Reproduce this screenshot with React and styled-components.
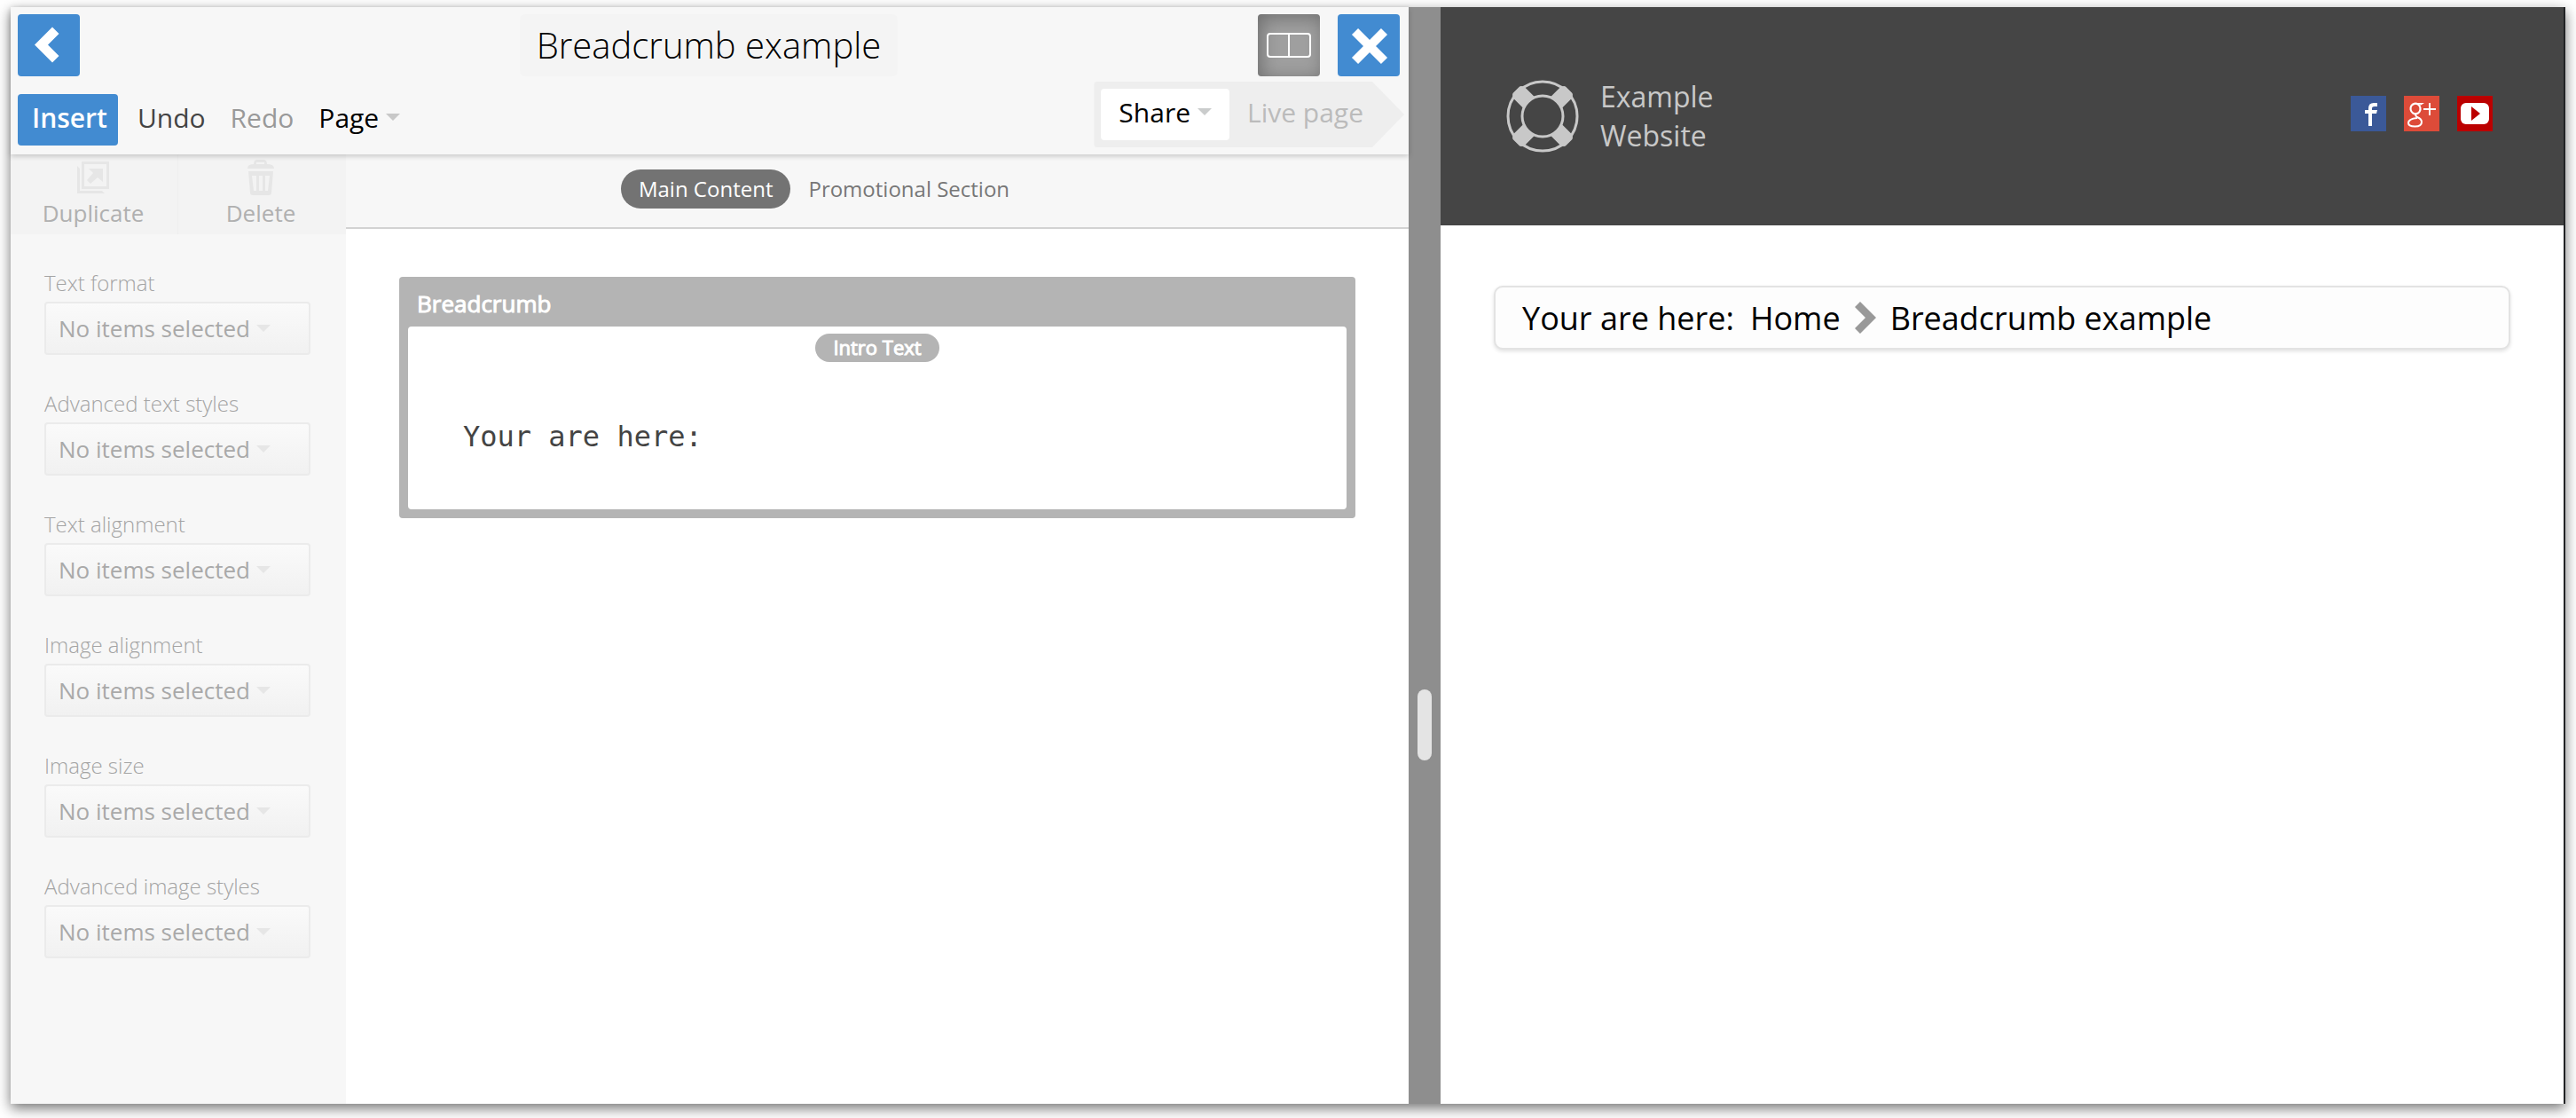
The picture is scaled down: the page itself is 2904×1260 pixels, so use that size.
import React from "react";
import styled, { createGlobalStyle } from "styled-components";

const GlobalStyle = createGlobalStyle`
  *, *::before, *::after { box-sizing: border-box; }
  body {
    margin: 0;
    background: #fff;
    color: #000;
    font-family: "Open Sans", "Noto Sans", sans-serif;
  }
  button, input, select, textarea { font: inherit; color: inherit; margin: 0; }
`;

const Page = styled.div`
  display: flex;
  min-height: 100vh;
  padding: 8px 12px 16px;
`;

const Window = styled.div`
  flex: 1;
  display: flex;
  min-width: 0;
  background: #fff;
  border-right: 2px solid #222426;
  box-shadow: 0 5px 14px rgba(0, 0, 0, 0.55);
`;

const EditorPane = styled.section`
  flex: 1576 1 0;
  min-width: 0;
  display: flex;
  flex-direction: column;
`;

const EditorHeader = styled.header`
  display: flex;
  flex-direction: column;
  gap: 6px;
  padding: 8px 0;
  background: #f7f7f7;
  box-shadow: 0 2px 6px rgba(0, 0, 0, 0.2);
  z-index: 1;
`;

const TitleRow = styled.div`
  display: grid;
  grid-template-columns: 1fr auto 1fr;
  padding: 0 10px 0 8px;
`;

const SquareButton = styled.button`
  display: grid;
  place-items: center;
  width: 70px;
  height: 70px;
  padding: 0;
  border: 0;
  border-radius: 4px;
  background: ${(p) => (p.$pressed ? "#9f9f9f" : "#428bd1")};
  box-shadow: ${(p) => (p.$pressed ? "inset 4px 4px 20px rgba(0, 0, 0, 0.3)" : "none")};
`;

const TitleInput = styled.input`
  width: 426px;
  height: 70px;
  padding: 0 12px 2px;
  border: 0;
  border-radius: 6px;
  background: #f4f4f4;
  font-size: 40px;
  font-weight: 300;
  text-align: center;
`;

const TitleActions = styled.div`
  display: flex;
  justify-content: flex-end;
  gap: 20px;
`;

const ToolRow = styled.div`
  display: flex;
  justify-content: space-between;
  align-items: flex-end;
  padding: 0 5px 0 8px;
`;

const Tools = styled.div`
  display: flex;
  align-items: center;
  gap: 28px;
  padding-bottom: 2px;
`;

const InsertButton = styled.button`
  height: 58px;
  margin-right: -6px;
  padding: 0 12px 6px 16px;
  border: 0;
  border-radius: 4px;
  background: #428bd1;
  color: #fff;
  font-size: 30px;
  font-weight: 600;
`;

const TextButton = styled.button`
  display: flex;
  align-items: center;
  gap: 8px;
  height: 58px;
  padding: 0 0 6px;
  border: 0;
  background: transparent;
  color: ${(p) => p.$color};
  font-size: 30px;
`;

const PublishBar = styled.div`
  display: flex;
  align-items: center;
  height: 74px;
  padding: 0 46px 0 8px;
  gap: 20px;
  border-radius: 4px;
  background: #eee;
  clip-path: polygon(0 0, calc(100% - 36px) 0, 100% 50%, calc(100% - 36px) 100%, 0 100%);
`;

const ShareButton = styled(TextButton)`
  padding: 0 20px 6px;
  border-radius: 4px;
  background: #fff;
`;

const EditorBody = styled.div`
  flex: 1;
  display: flex;
`;

const Sidebar = styled.aside`
  flex: none;
  width: 378px;
  background: #f7f7f7;
`;

const SidebarActions = styled.div`
  display: grid;
  grid-template-columns: 1fr 1fr;
  background: #f3f3f3;
`;

const SidebarAction = styled.button`
  display: flex;
  flex-direction: column;
  align-items: center;
  height: 90px;
  padding: 4px 2px 0 0;
  border: 0;
  border-right: 1px solid ${(p) => (p.$divided ? "#eee" : "transparent")};
  background: transparent;
  color: #b0b0b0;
  font-size: 26px;
  line-height: 36px;
`;

const FieldList = styled.div`
  display: flex;
  flex-direction: column;
  gap: 36px;
  padding: 36px 40px 36px 38px;
`;

const Field = styled.div`
  display: flex;
  flex-direction: column;
`;

const FieldLabel = styled.label`
  height: 40px;
  color: #a4a4a4;
  font-size: 24px;
  font-weight: 300;
  line-height: 38px;
`;

const SelectFrame = styled.div`
  display: grid;
  align-items: center;
  border: 2px solid #ebebeb;
  border-radius: 4px;
  background: linear-gradient(#fafafa, #f1f1f1);

  & > * { grid-area: 1 / 1; }
  & > svg { margin-left: 237px; }
`;

const Select = styled.select`
  width: 100%;
  height: 56px;
  padding: 0 14px;
  border: 0;
  appearance: none;
  background: transparent;
  color: #a9a9a9;
  font-size: 26px;
  opacity: 1;
`;

const Canvas = styled.main`
  flex: 1;
  min-width: 0;
`;

const SectionTabs = styled.nav`
  display: flex;
  justify-content: center;
  align-items: center;
  height: 84px;
  padding: 0 120px 4px 0;
  border-bottom: 2px solid #d2d2d2;
  background: #f7f7f7;
`;

const SectionTab = styled.button`
  height: 44px;
  padding: 0 20px 2px;
  border: 0;
  border-radius: 22px;
  background: ${(p) => (p.$active ? "#737373" : "transparent")};
  color: ${(p) => (p.$active ? "#fff" : "#777")};
  font-size: 24px;
`;

const Block = styled.article`
  margin: 54px 60px;
  padding: 0 10px 10px;
  border-radius: 4px;
  background: #b4b4b4;
`;

const BlockTitle = styled.h2`
  margin: 0;
  padding: 4px 10px 0;
  color: #fff;
  font-size: 26px;
  font-weight: 500;
  line-height: 52px;
  -webkit-text-stroke: 1px #fff;
`;

const BlockBody = styled.div`
  display: flex;
  flex-direction: column;
  align-items: center;
  height: 206px;
  padding: 8px 62px 0;
  border-radius: 4px;
  background: #fff;
`;

const FieldTag = styled.label`
  height: 32px;
  padding: 0 20px;
  border-radius: 16px;
  background: #b4b4b4;
  color: #fff;
  font-size: 22px;
  font-weight: 500;
  line-height: 30px;
  -webkit-text-stroke: 1px #fff;
`;

const IntroText = styled.textarea`
  width: 100%;
  height: 80px;
  margin-top: 64px;
  padding: 0;
  border: 0;
  resize: none;
  overflow: hidden;
  background: transparent;
  color: #444;
  font-family: "DejaVu Sans Mono", monospace;
  font-size: 32px;
  line-height: 40px;
`;

const Splitter = styled.div`
  flex: none;
  width: 36px;
  padding: 769px 10px 0;
  background: #8e8e8e;
`;

const SplitterHandle = styled.div`
  height: 80px;
  border-radius: 8px;
  background: #e4e4e4;
`;

const PreviewPane = styled.section`
  flex: 1266 1 0;
  min-width: 0;
`;

const SiteHeader = styled.header`
  display: flex;
  justify-content: space-between;
  align-items: center;
  height: 246px;
  padding: 0 80px 6px 74px;
  background: #454545;
`;

const Brand = styled.a`
  display: flex;
  align-items: center;
  gap: 24px;
  padding-top: 6px;
  color: #c8c8c8;
  font-size: 32px;
  line-height: 44px;
  text-decoration: none;
`;

const SocialLinks = styled.nav`
  display: flex;
  gap: 20px;

  a, svg { display: block; }
`;

const Breadcrumb = styled.nav`
  display: flex;
  align-items: center;
  height: 72px;
  margin: 68px 60px;
  padding: 0 30px;
  border: 2px solid #e3e3e3;
  border-radius: 10px;
  background: #fdfdfd;
  box-shadow: 0 2px 4px rgba(0, 0, 0, 0.12);
  font-size: 36px;

  & > svg { margin: 0 16px; }
`;

const CrumbLink = styled.a`
  margin-left: 18px;
  color: inherit;
  text-decoration: none;
`;

const Caret = ({ color }) => (
  <svg width="16" height="8" viewBox="0 0 16 8" aria-hidden="true">
    <path d="M0 0H16L8 8Z" fill={color} />
  </svg>
);

const DuplicateIcon = () => (
  <svg width="40" height="44" viewBox="0 0 40 44" fill="#e6e6e6" aria-hidden="true">
    <path fillRule="evenodd" d="M7 4H38V35H7ZM10 7V32H35V7Z" />
    <path d="M2 9L5 12V37H30L33 40H2Z" />
    <path d="M15 12H31V27L25 22L17 29L13 25L20 17Z" />
  </svg>
);

const TrashIcon = () => (
  <svg width="40" height="44" viewBox="0 0 40 44" fill="#e6e6e6" aria-hidden="true">
    <path fillRule="evenodd" d="M12 7Q12 2 16 2H23Q27 2 27 7Q35 7 35 12H5Q5 7 12 7ZM15 7H24V5H15Z" />
    <path fillRule="evenodd" d="M6 15H34L32 39Q32 42 29 42H11Q8 42 8 39ZM10 20L12 37H15V20ZM18 20V37H22V20ZM25 20V37H28L30 20Z" />
  </svg>
);

const LifeRing = () => (
  <svg width="82" height="82" viewBox="-41 -41 82 82" overflow="visible" aria-hidden="true">
    <g fill="none" stroke="#c8c8c8" strokeWidth="3">
      <circle r="39" />
      <circle r="23" />
    </g>
    {[45, 135, 225, 315].map((angle) => (
      <path
        key={angle}
        d="M21 -9Q24 0 21 9L38 9Q42 7 42 5V-5Q42 -7 38 -9Z"
        fill="#c8c8c8"
        transform={`rotate(${angle})`}
      />
    ))}
  </svg>
);

const FacebookIcon = () => (
  <svg width="40" height="40" viewBox="0 0 40 40" aria-hidden="true">
    <rect width="40" height="40" fill="#3b5998" />
    <path d="M20 34V20H16V16H20V14Q20 8 26 8H30V12H27Q24 12 24 14V16H30L29 20H24V34Z" fill="#fff" />
  </svg>
);

const GooglePlusIcon = () => (
  <svg width="40" height="40" viewBox="0 0 40 40" fill="none" stroke="#fff" aria-hidden="true">
    <rect width="40" height="40" fill="#dd4b39" stroke="none" />
    <ellipse cx="13" cy="14.500" rx="5.500" ry="5.800" strokeWidth="2.200" transform="rotate(-12 13 14.500)" />
    <path d="M12 8.700H21L19 10H16" strokeWidth="1.200" />
    <path d="M14 20Q12 22 15 24Q20 26 20 29.500Q20 34.500 12.500 34.500Q5 34.500 5 30.500Q5 26 15 25" strokeWidth="2" />
    <path d="M22 15H36M29 8V22" strokeWidth="2" />
  </svg>
);

const YouTubeIcon = () => (
  <svg width="40" height="40" viewBox="0 0 40 40" aria-hidden="true">
    <rect width="40" height="40" fill="#bb0000" />
    <rect x="4" y="8" width="32" height="24" rx="6" fill="#fff" />
    <path d="M16 12L26 20L16 28Z" fill="#bb0000" />
  </svg>
);

const FIELDS = [
  "Text format",
  "Advanced text styles",
  "Text alignment",
  "Image alignment",
  "Image size",
  "Advanced image styles",
];

function StyleField({ label }) {
  const id = label.toLowerCase().replaceAll(" ", "-");
  return (
    <Field>
      <FieldLabel htmlFor={id}>{label}</FieldLabel>
      <SelectFrame>
        <Select id={id} disabled>
          <option>No items selected</option>
        </Select>
        <Caret color="#e6e6e6" />
      </SelectFrame>
    </Field>
  );
}

export default function App() {
  return (
    <>
      <GlobalStyle />
      <Page>
        <Window>
          <EditorPane>
            <EditorHeader>
              <TitleRow>
                <SquareButton aria-label="Back">
                  <svg width="70" height="70" viewBox="0 0 70 70" aria-hidden="true">
                    <path d="M39 14.500L46.500 22L34 34.500L46.500 47L39 54.500L19 34.500Z" fill="#fff" />
                  </svg>
                </SquareButton>
                <TitleInput aria-label="Page title" defaultValue="Breadcrumb example" />
                <TitleActions>
                  <SquareButton $pressed aria-label="Split view" aria-pressed="true">
                    <svg width="50" height="28" viewBox="0 0 50 28" fill="none" stroke="#fff" strokeWidth="2" aria-hidden="true">
                      <rect x="1" y="1" width="48" height="26" rx="3" />
                      <path d="M25 1V27" />
                    </svg>
                  </SquareButton>
                  <SquareButton aria-label="Close">
                    <svg width="70" height="70" viewBox="0 0 70 70" aria-hidden="true">
                      <path d="M19.500 19.500L52.500 52.500M52.500 19.500L19.500 52.500" stroke="#fff" strokeWidth="10" />
                    </svg>
                  </SquareButton>
                </TitleActions>
              </TitleRow>
              <ToolRow>
                <Tools>
                  <InsertButton>Insert</InsertButton>
                  <TextButton $color="#444">Undo</TextButton>
                  <TextButton $color="#999">Redo</TextButton>
                  <TextButton $color="#000">
                    Page
                    <Caret color="#c8c8c8" />
                  </TextButton>
                </Tools>
                <PublishBar>
                  <ShareButton $color="#000">
                    Share
                    <Caret color="#cacccc" />
                  </ShareButton>
                  <TextButton $color="#bbb">Live page</TextButton>
                </PublishBar>
              </ToolRow>
            </EditorHeader>
            <EditorBody>
              <Sidebar>
                <SidebarActions>
                  <SidebarAction disabled $divided>
                    <DuplicateIcon />
                    Duplicate
                  </SidebarAction>
                  <SidebarAction disabled>
                    <TrashIcon />
                    Delete
                  </SidebarAction>
                </SidebarActions>
                <FieldList>
                  {FIELDS.map((label) => (
                    <StyleField key={label} label={label} />
                  ))}
                </FieldList>
              </Sidebar>
              <Canvas>
                <SectionTabs>
                  <SectionTab $active>Main Content</SectionTab>
                  <SectionTab>Promotional Section</SectionTab>
                </SectionTabs>
                <Block>
                  <BlockTitle>Breadcrumb</BlockTitle>
                  <BlockBody>
                    <FieldTag htmlFor="intro-text">Intro Text</FieldTag>
                    <IntroText id="intro-text" defaultValue="Your are here:" spellCheck={false} />
                  </BlockBody>
                </Block>
              </Canvas>
            </EditorBody>
          </EditorPane>
          <Splitter role="separator" aria-orientation="vertical">
            <SplitterHandle />
          </Splitter>
          <PreviewPane>
            <SiteHeader>
              <Brand href="#home">
                <LifeRing />
                <span>
                  Example
                  <br />
                  Website
                </span>
              </Brand>
              <SocialLinks aria-label="Social media">
                <a href="#facebook" aria-label="Facebook"><FacebookIcon /></a>
                <a href="#google-plus" aria-label="Google Plus"><GooglePlusIcon /></a>
                <a href="#youtube" aria-label="YouTube"><YouTubeIcon /></a>
              </SocialLinks>
            </SiteHeader>
            <Breadcrumb aria-label="Breadcrumb">
              <span>Your are here:</span>
              <CrumbLink href="#home">Home</CrumbLink>
              <svg width="24" height="36" viewBox="0 0 24 36" aria-hidden="true">
                <path d="M6 0L24 18L6 36L0 30L12 18L0 6Z" fill="#999" />
              </svg>
              <span>Breadcrumb example</span>
            </Breadcrumb>
          </PreviewPane>
        </Window>
      </Page>
    </>
  );
}
